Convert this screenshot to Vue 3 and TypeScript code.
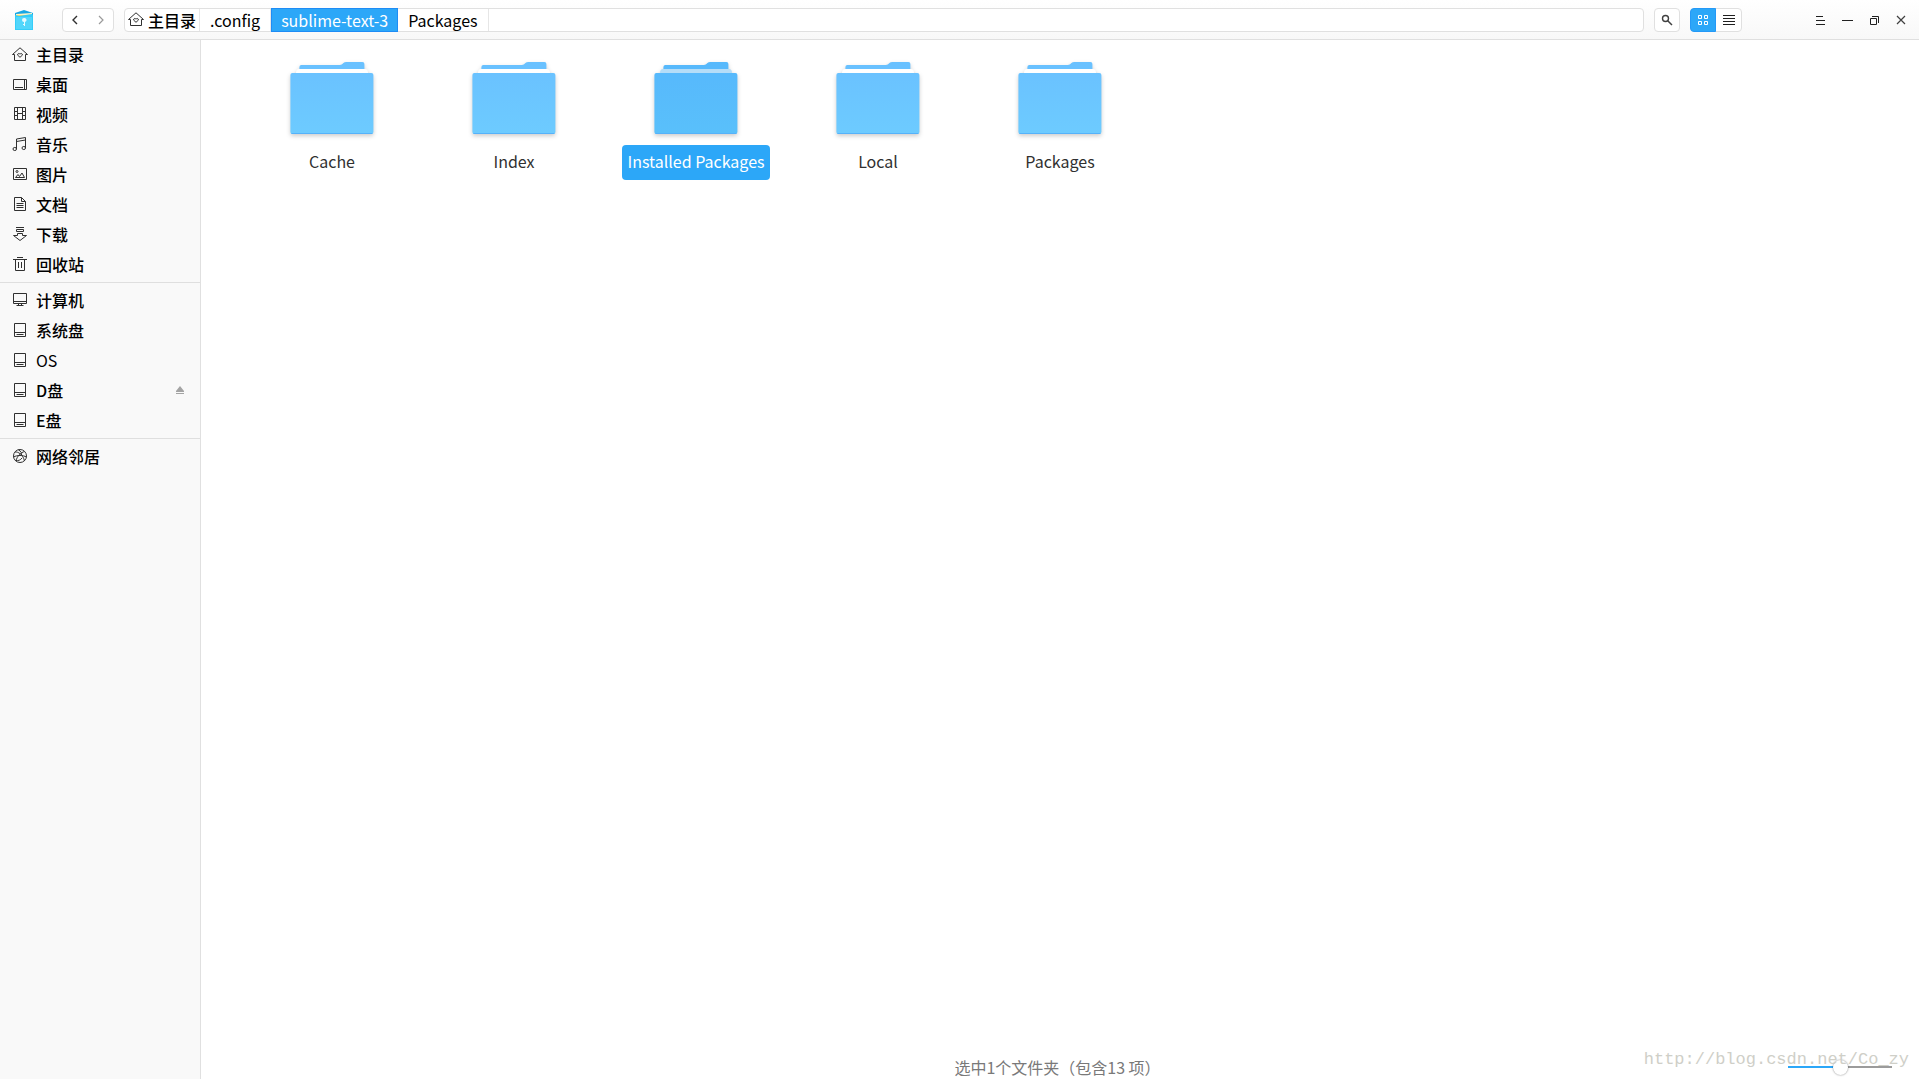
<script setup lang="ts">
import { ref } from 'vue'

type IconName =
  | 'home' | 'desktop' | 'video' | 'music' | 'picture' | 'document'
  | 'download' | 'trash' | 'computer' | 'disk' | 'network'

interface Place {
  label: string
  icon: IconName
  latin?: boolean
  ejectable?: boolean
}

const icons: Record<IconName, string> = {
  home: 'M.5 7.5 8 .8l7.5 6.7h-2v6h-11v-6zM8 10.3 5.7 8.2C5.2 6.2 7.2 6 8 7.2c.8-1.2 2.8-1 2.3 1z',
  desktop: 'M1.5 2.5h13v10h-13zM12.5 2.5v10M3 10.5h8',
  video: 'M2.5.5h11v12h-11zM5.5.5v12M10.5.5v12M5.5 6.5h5M2.5 4.5h3M2.5 8.5h3M10.5 4.5h3M10.5 8.5h3',
  music: 'M4.5 12V2l9-1.5V11M4.5 4.5l9-1.5M4.5 12a1.7 1.5 0 1 1-3.5 0a1.7 1.5 0 1 1 3.5 0M13.5 11a1.7 1.5 0 1 1-3.5 0a1.7 1.5 0 1 1 3.5 0',
  picture: 'M1.5 1.5h13v11h-13zM3.5 10.5 6 7.5l1.5 2L10 6l2.5 4.5zM6 4.5a1 1 0 1 1-2 0a1 1 0 1 1 2 0',
  document: 'M2.5.5h7l4 4v9h-11zM9.5.5v4h4M4.5 6.5h7M4.5 8.5h7M4.5 10.5h7',
  download: 'M4 .5h8M4.5 2.5h7v2h-7zM5.5 6.5h5v2h4L8 13.5 1.5 8.5h4z',
  trash: 'M1 2.5h14M5 .5h6M3.5 2.5v11h9v-11M6.5 5v6M9.5 5v6',
  computer: 'M1.5.5h13v10h-13zM1.5 8.5h13M6.5 10.5v2M9.5 10.5v2M4.5 12.5h7',
  disk: 'M2.5.5h11v13h-11zM2.5 9.5h11M4.5 11.5h7',
  network: 'M14.5 7a6.5 6.5 0 1 1-13 0a6.5 6.5 0 1 1 13 0M3 3c3-.5 8 2.5 9.5 9M12.5 2.5C9 3.5 5 7 4 12M1.5 8C5 6 11 6 14.5 8M6.5.8C9 2.5 10 4 9.5 6M3.5 11.5c3 .5 5-.5 6.5-2.5'
}

const groups: Place[][] = [
  [
    { label: '主目录', icon: 'home' },
    { label: '桌面', icon: 'desktop' },
    { label: '视频', icon: 'video' },
    { label: '音乐', icon: 'music' },
    { label: '图片', icon: 'picture' },
    { label: '文档', icon: 'document' },
    { label: '下载', icon: 'download' },
    { label: '回收站', icon: 'trash' }
  ],
  [
    { label: '计算机', icon: 'computer' },
    { label: '系统盘', icon: 'disk' },
    { label: 'OS', icon: 'disk', latin: true },
    { label: 'D盘', icon: 'disk', ejectable: true },
    { label: 'E盘', icon: 'disk' }
  ],
  [{ label: '网络邻居', icon: 'network' }]
]

const crumbs = ['主目录', '.config', 'sublime-text-3', 'Packages']
const currentCrumb = 'sublime-text-3'

const folders = ['Cache', 'Index', 'Installed Packages', 'Local', 'Packages']
const selected = ref('Installed Packages')
const zoom = ref(50)
</script>

<template>
  <div class="window">
    <header class="toolbar">
      <svg class="logo" width="20" height="20" viewBox="0 0 20 20" aria-hidden="true">
        <path d="M0 3 9 0l9 3v4H0z" fill="#17a7e6" />
        <path d="M1 4 17 3v4H1z" fill="#fff3c4" />
        <path d="M1 5h16v2H1z" fill="#fbd75f" />
        <path d="M0 5l4 1 13-2 1 1v15H0z" fill="#35cdf9" />
        <path d="M1 7h16v12H1z" fill="#52d6fb" />
        <path d="M9 8a2 2 0 0 1 1 4v4H9v-1H8v-1h1v-2a2 2 0 0 1 0-4z" fill="#e6faff" />
      </svg>

      <div class="group nav">
        <button type="button" aria-label="后退">
          <svg width="8" height="10" viewBox="0 0 8 10"><path d="M5 1 1 5l4 4" stroke="#303030" stroke-width="1.4" fill="none" /></svg>
        </button>
        <button type="button" aria-label="前进">
          <svg width="8" height="10" viewBox="0 0 8 10"><path d="M2 1l4 4-4 4" stroke="#9a9a9a" stroke-width="1.2" fill="none" /></svg>
        </button>
      </div>

      <nav class="address" aria-label="路径">
        <a
          v-for="(crumb, i) in crumbs"
          :key="crumb"
          href="#"
          class="crumb"
          :class="{ root: i === 0, current: crumb === currentCrumb }"
        >
          <svg v-if="i === 0" class="line-icon" width="16" height="16" viewBox="0 0 16 16"><path :d="icons.home" /></svg>
          {{ crumb }}
        </a>
      </nav>

      <button type="button" class="group search" aria-label="搜索">
        <svg width="12" height="12" viewBox="0 0 12 12">
          <circle cx="4.5" cy="4.5" r="3" fill="none" stroke="#404040" stroke-width="1.4" />
          <path d="m6.5 6.5 4.5 4.5" stroke="#404040" stroke-width="1.5" />
        </svg>
      </button>

      <div class="group views">
        <button type="button" class="active" aria-label="图标视图">
          <svg width="12" height="12" viewBox="0 0 12 12"><path d="M1.5 1.5h3v3h-3zM7.5 1.5h3v3h-3zM1.5 7.5h3v3h-3zM7.5 7.5h3v3h-3z" fill="none" stroke="#fff" /></svg>
        </button>
        <button type="button" aria-label="列表视图">
          <svg width="12" height="12" viewBox="0 0 12 12"><path d="M0 1.5h12M0 4.5h12M0 7.5h12M0 10.5h12" stroke="#202020" /></svg>
        </button>
      </div>

      <div class="controls">
        <button type="button" aria-label="菜单">
          <svg width="12" height="12" viewBox="0 0 12 12"><path d="M2 2.5h7M2 6.5h9M2 10.5h9" stroke="#202020" /></svg>
        </button>
        <button type="button" aria-label="最小化">
          <svg width="12" height="12" viewBox="0 0 12 12"><path d="M1 6.5h11" stroke="#202020" /></svg>
        </button>
        <button type="button" aria-label="还原">
          <svg width="12" height="12" viewBox="0 0 12 12"><path d="M2.5 4.5h6v6h-6zM4 2.5h6.5V9" fill="none" stroke="#202020" /></svg>
        </button>
        <button type="button" aria-label="关闭">
          <svg width="12" height="12" viewBox="0 0 12 12"><path d="m2 2 8 8M10 2l-8 8" stroke="#404040" stroke-width="1.2" /></svg>
        </button>
      </div>
    </header>

    <div class="body">
      <aside class="sidebar">
        <ul v-for="(group, g) in groups" :key="g">
          <li v-for="place in group" :key="place.label">
            <a href="#">
              <svg class="line-icon" width="16" height="16" viewBox="0 0 16 16"><path :d="icons[place.icon]" /></svg>
              <span :class="{ latin: place.latin }">{{ place.label }}</span>
            </a>
            <button v-if="place.ejectable" type="button" class="eject" aria-label="弹出">
              <svg width="8" height="8" viewBox="0 0 8 8"><path d="M4 0 8 5v1H0V5zM0 7h8v1H0z" fill="#a4a4a4" /></svg>
            </button>
          </li>
        </ul>
      </aside>

      <main class="content">
        <div class="files">
          <button
            v-for="name in folders"
            :key="name"
            type="button"
            class="file"
            :class="{ selected: name === selected }"
            @click="selected = name"
          >
            <svg class="folder" width="90" height="80" viewBox="0 0 90 80" aria-hidden="true">
              <defs>
                <linearGradient :id="'fill-' + name.replace(' ', '-')" x1="0" y1="0" x2="0" y2="1">
                  <stop offset="0" :stop-color="name === selected ? '#57b9fc' : '#6ac2ff'" />
                  <stop offset="1" :stop-color="name === selected ? '#59c0fb' : '#6dcbff'" />
                </linearGradient>
              </defs>
              <path class="tab" d="M12.4 12V7q0-2 2-2h38q2 0 3-1l1-1q1-1 3-1h16q2 0 2 2v8z" />
              <path class="paper" d="M9 13q0-4 3-4h66q3 0 3 4v3H9z" />
              <rect class="front" x="3.4" y="13" width="83" height="61" rx="2" :fill="'url(#fill-' + name.replace(' ', '-') + ')'" />
              <path class="edge" d="M4.4 73.5h81" />
            </svg>
            <span class="name">{{ name }}</span>
          </button>
        </div>

        <footer class="status">
          <span>选中1个文件夹（包含13 项）</span>
          <input v-model="zoom" type="range" min="0" max="100" aria-label="图标大小" />
        </footer>
        <span class="watermark">http://blog.csdn.net/Co_zy</span>
      </main>
    </div>
  </div>
</template>

<style>
body {
  margin: 0;
  background: #fff;
}
</style>

<style scoped>
.window {
  display: flex;
  flex-direction: column;
  min-height: 100vh;
  font: 16px/24px "Noto Sans CJK SC", sans-serif;
  color: #000;
}

button {
  display: flex;
  align-items: center;
  justify-content: center;
  padding: 0;
  border: 0;
  background: none;
  font: inherit;
  color: inherit;
}

a {
  color: inherit;
  text-decoration: none;
}

ul {
  margin: 0;
  padding: 0;
  list-style: none;
}

.line-icon {
  flex: none;
  fill: none;
  stroke: #303030;
}

.toolbar {
  display: flex;
  align-items: center;
  box-sizing: border-box;
  height: 40px;
  padding: 0 5px 0 15px;
  border-bottom: 1px solid #dfdfdf;
  background: linear-gradient(#fff, #f8f8f8);
}

.logo {
  margin-right: 27px;
}

.group {
  display: flex;
  box-sizing: border-box;
  height: 24px;
  border: 1px solid #e0e0e0;
  border-radius: 4px;
  background: #fff;
}

.nav {
  width: 52px;
  margin-right: 10px;
}

.nav button {
  flex: 1;
}

.address {
  display: flex;
  flex: 1;
  box-sizing: border-box;
  height: 24px;
  border: 1px solid #e0e0e0;
  border-radius: 4px;
  background: #fff;
}

.crumb {
  display: flex;
  align-items: center;
  gap: 4px;
  box-sizing: border-box;
  height: 22px;
  padding: 0 10px;
  border-right: 1px solid #e6e6e6;
}

.crumb.root {
  padding: 0 3px;
  font-weight: 500;
}

.crumb.current {
  height: 24px;
  margin: -1px 0;
  padding: 0 9px;
  border: 1px solid #1e8cf5;
  background: #2ca7f8;
  color: #fff;
}

.search {
  width: 26px;
  margin: 0 10px;
}

.views {
  width: 52px;
}

.views button {
  box-sizing: border-box;
  width: 25px;
}

.views .active {
  width: 26px;
  margin: -1px 0 -1px -1px;
  border: 1px solid #2499f7;
  border-radius: 4px 0 0 4px;
  background: #2ca7f8;
}

.controls {
  display: flex;
  margin-left: 64px;
}

.controls button {
  width: 27px;
  height: 24px;
}

.body {
  display: flex;
  flex: 1;
}

.sidebar {
  width: 200px;
  border-right: 1px solid #e0e0e0;
  background: #f9f9f9;
  font-weight: 500;
}

.sidebar ul + ul {
  margin-top: 2px;
  padding-top: 3px;
  border-top: 1px solid #dfdfdf;
}

.sidebar li {
  display: flex;
  align-items: center;
  height: 30px;
  padding: 0 16px 0 12px;
}

.sidebar a {
  display: flex;
  flex: 1;
  align-items: center;
  gap: 8px;
}

.sidebar span,
.eject {
  padding-bottom: 2px;
}

.sidebar .latin {
  font-weight: 400;
}

.content {
  position: relative;
  display: flex;
  flex: 1;
  flex-direction: column;
}

.files {
  display: flex;
  flex: 1;
  flex-wrap: wrap;
  align-content: flex-start;
  padding: 20px 40px;
}

.file {
  flex-direction: column;
  gap: 5px;
  width: 182px;
  color: #303030;
}

.folder {
  filter: drop-shadow(0 2px 2px rgba(0, 0, 0, 0.2));
}

.tab {
  fill: #69c1ff;
}

.paper {
  fill: #fff;
}

.edge {
  stroke: #55b2fa;
}

.selected .tab {
  fill: #57b9fc;
}

.selected .paper {
  fill: #b5ddf8;
}

.name {
  padding: 4px 5px 7px;
  border-radius: 4px;
  white-space: nowrap;
}

.selected .name {
  background: #2ca7f8;
  color: #fff;
}

.status {
  display: flex;
  align-items: center;
  height: 24px;
  padding: 0 27px 0 24px;
  color: #797979;
}

.status span {
  flex: 1;
  padding-left: 102px;
  text-align: center;
}

.status input {
  width: 104px;
  height: 16px;
  margin: 0;
  appearance: none;
  background: linear-gradient(90deg, #2ca7f8 50%, #9b9b9b 50%) center / 100% 2px no-repeat;
}

.status input::-webkit-slider-thumb {
  width: 15px;
  height: 15px;
  appearance: none;
  border-radius: 50%;
  background: #fff;
  box-shadow: 0 0 2px rgba(0, 0, 0, 0.5);
}

.watermark {
  position: absolute;
  right: 10px;
  bottom: 7px;
  font: 17px/24px "Liberation Mono", monospace;
  color: #cfcfc8;
  pointer-events: none;
}
</style>
